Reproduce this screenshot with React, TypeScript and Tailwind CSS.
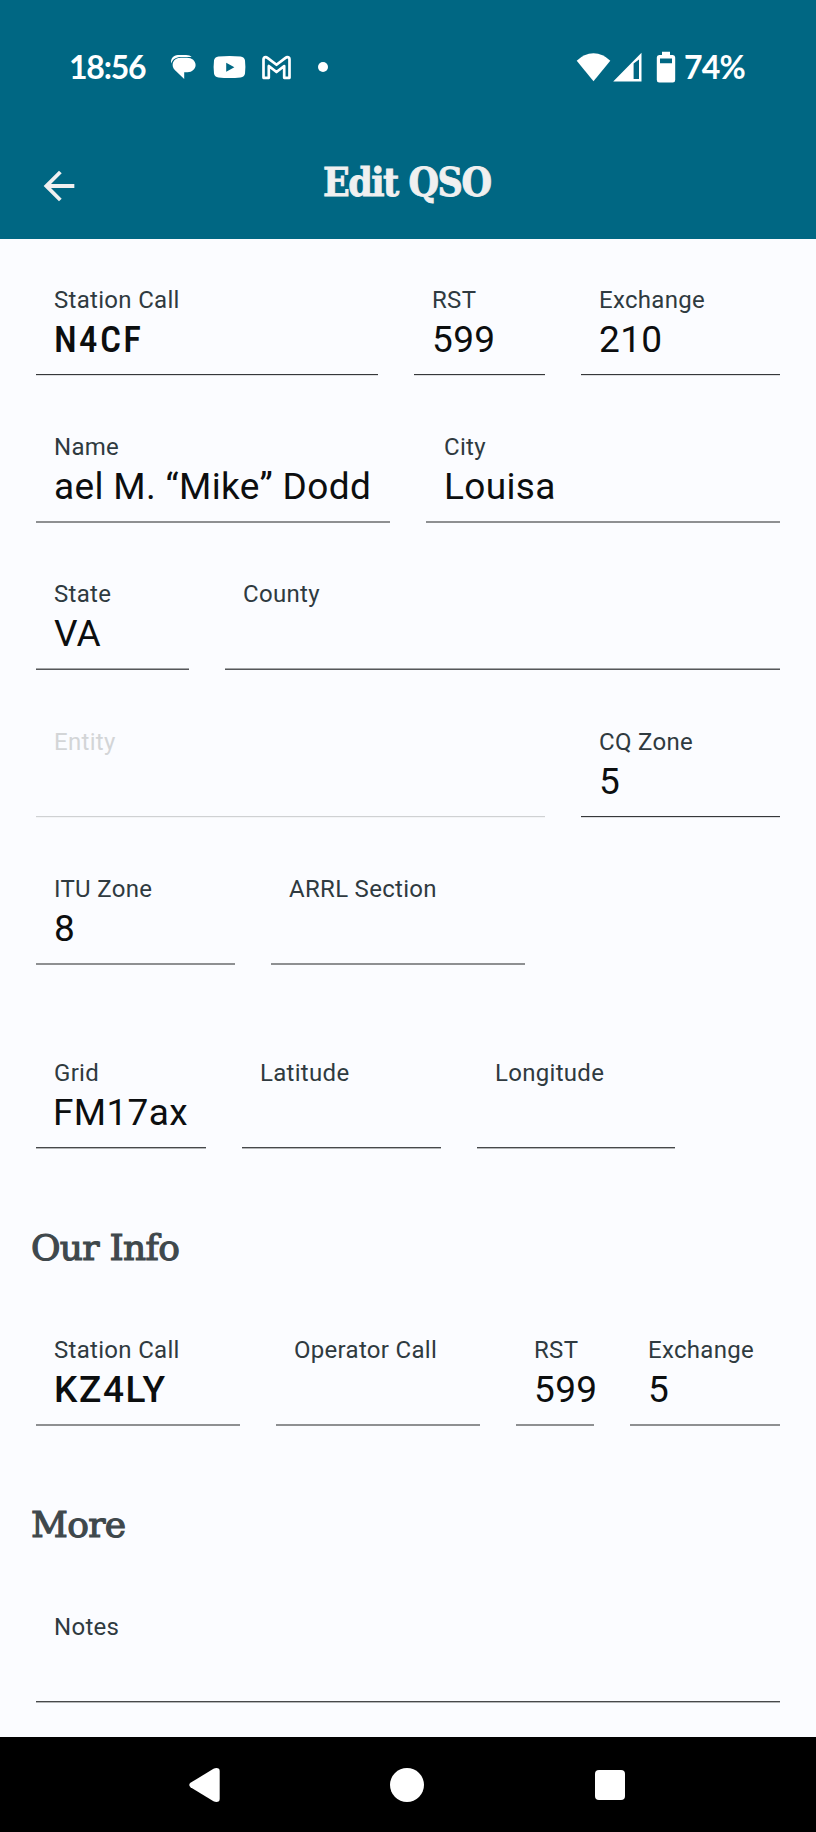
import React from 'react';

type FieldProps = {
  label: string;
  value?: string;
  width?: string;
  line?: string;
  valueClass?: string;
  disabled?: boolean;
};

// Two-pixel rules, lighter where the line falls between pixels
const LINE_SHARP = 'border-t-[#36383a] border-b-[#dcdde0]';
const LINE_EVEN = 'border-t-[#8e9092] border-b-[#8e9092]';
const LINE_MID = 'border-t-[#a3a5a7] border-b-[#55575a]';
const LINE_TOP = 'border-t-[#46484a] border-b-[#b4b6b8]';

const Field: React.FC<FieldProps> = ({
  label,
  value = '',
  width = 'flex-1',
  line = LINE_EVEN,
  valueClass = 'pl-[18px] tracking-[0.35px]',
  disabled = false,
}) => (
  <div className={`flex h-[94px] min-w-0 flex-col ${width}`}>
    <label
      className={`mt-[4px] pl-[18px] text-[24px] leading-[28px] tracking-[0.3px] whitespace-nowrap ${
        disabled ? 'text-[#d3d5d7]' : 'text-[#2f3a40]'
      }`}
    >
      {label}
    </label>
    <div className={`mt-[4px] h-[43px] text-[37px] leading-[43px] whitespace-nowrap text-[#0c0e0f] ${valueClass}`}>
      {value}
    </div>
    <div
      className={`mt-auto h-[2px] border-t border-b ${
        disabled ? 'border-t-[#cfd1d3] border-b-[#f3f4f6]' : line
      }`}
    />
  </div>
);

const Row: React.FC<{ className?: string; children: React.ReactNode }> = ({ className = '', children }) => (
  <div className={`flex gap-9 px-9 ${className}`}>{children}</div>
);

const SectionTitle: React.FC<{ className?: string; children: React.ReactNode }> = ({ className = '', children }) => (
  <h2
    className={`pl-[31px] font-['Roboto_Slab','DejaVu_Serif',serif] text-[36px] leading-[44px] tracking-[-0.7px] text-[#3f484c] [-webkit-text-stroke:1.2px_#3f484c] ${className}`}
  >
    {children}
  </h2>
);

const StatusBar = () => (
  <div className="flex h-[134px] items-center pr-[70px] pl-[69px] font-['Google_Sans',Lato,sans-serif] text-white">
    <span className="w-[101px] text-[32px] leading-[40px] font-bold tracking-[-1.2px]">18:56</span>
    <svg width="27" height="26" viewBox="0 0 27 26" fill="currentColor">
      <path d="M1.2 9.5C.2 5 3.500 1 8 1h8c2.500 0 4.500.9 5.700 2H11C6 3 2.500 5.200 1.200 9.500Z" />
      <path d="M11 3.800h6c5 0 8.600 3.200 8.600 7.200S22 18.200 17.500 18.200H14.200V25L4.800 16C2.600 13.800 2.200 11 3 8.600 4 5.500 7 3.800 11 3.800Z" />
    </svg>
    <svg className="ml-4" width="33" height="24" viewBox="0 0 33 24">
      <path
        fill="currentColor"
        fillRule="evenodd"
        d="M5.500 1.500Q16.500.3 27.500 1.500 31.500 2 32 5.500 32.800 12 32 18.500 31.500 22 27.500 22.500 16.500 23.700 5.500 22.500 1.500 22 1 18.500.2 12 1 5.500 1.500 2 5.500 1.500ZM13.200 7.700V16.700L21.400 12.200Z"
      />
    </svg>
    <svg className="ml-[15px]" width="31" height="25" viewBox="0 0 31 25" fill="none" stroke="currentColor" strokeWidth="2.7" strokeLinejoin="round">
      <path d="M2.500 22.800V4.500Q2.500 2.200 4.700 2.200 5.700 2.200 6.500 2.900L15.500 9.800 24.500 2.900Q25.300 2.200 26.300 2.200 28.500 2.200 28.500 4.500V22.800H23.200V11L15.500 17 7.800 11V22.800Z" />
    </svg>
    <span className="ml-[26px] h-[10px] w-[10px] rounded-full bg-white" />
    <div className="ml-auto flex items-center">
      <svg width="35" height="30" viewBox="0 0 35 30" fill="currentColor">
        <path d="M17.500 29.300.7 8.800Q8 1.300 17.500 1.300T34.300 8.800Z" />
      </svg>
      <svg className="ml-[2px]" width="29" height="30" viewBox="0 0 29 30">
        <path fill="currentColor" fillRule="evenodd" d="M28.500.8V29.500H.2ZM20.600 11.400V27H26V7.500Z" />
      </svg>
      <svg className="ml-[14px]" width="20" height="32" viewBox="0 0 20 32">
        <path
          fill="currentColor"
          fillRule="evenodd"
          d="M6 .8H14V4H16.800Q19.200 4 19.200 6.500V29Q19.200 31.500 16.800 31.500H3.200Q.8 31.500.8 29V6.500Q.8 4 3.200 4H6ZM4 7.500V12.300H16V7.500Z"
        />
      </svg>
      <span className="ml-[8px] w-[62px] text-[32px] leading-[40px] font-bold tracking-[-0.8px]">74%</span>
    </div>
  </div>
);

const AppBar = () => (
  <div className="flex h-[105px] items-start pl-[36px]">
    <button className="mt-[29px] text-[#f0f0f0]" aria-label="Back">
      <svg width="46" height="46" viewBox="0 0 24 24" fill="currentColor">
        <path d="M20 11H7.830l5.590-5.590L12 4l-8 8 8 8 1.410-1.410L7.830 13H20v-2z" />
      </svg>
    </button>
    <h1 className="mt-[24px] ml-[241px] font-['Roboto_Slab','DejaVu_Serif_Condensed','DejaVu_Serif',serif] text-[39px] leading-[48px] font-bold tracking-[-1.5px] whitespace-nowrap text-[#f0f0f0] [-webkit-text-stroke:0.8px_#f0f0f0]">
      Edit QSO
    </h1>
  </div>
);

const NavBar = () => (
  <nav className="flex h-[95px] items-center bg-black pl-[188px] text-white">
    <svg width="34" height="36" viewBox="0 0 34 36" fill="currentColor">
      <path d="M2.500 15.800 25.500 1.800Q28.500.300 31 1.800 31.700 2.500 31.700 4.500V31.500Q31.700 33.500 31 34.200 28.500 35.700 25.500 34.200L2.500 20.200Q0 18 2.500 15.800Z" />
    </svg>
    <span className="ml-[168px] h-[34px] w-[34px] rounded-full bg-white" />
    <span className="ml-[171px] h-[30px] w-[30px] rounded-[4px] bg-white" />
  </nav>
);

const App: React.FC = () => {
  return (
    <div className="flex h-[1832px] w-[816px] flex-col overflow-hidden bg-[#fbfcff] font-['Roboto',sans-serif]">
      <header className="bg-[#006783]">
        <StatusBar />
        <AppBar />
      </header>

      <main className="flex flex-1 flex-col pt-[43px]">
        <Row>
          <Field
            label="Station Call"
            value="N4CF"
            width="w-[342px]"
            line={LINE_SHARP}
            valueClass="pl-[18px] font-medium tracking-[2.3px] [font-stretch:85%]"
          />
          <Field label="RST" value="599" width="w-[131px]" line={LINE_SHARP} />
          <Field label="Exchange" value="210" line={LINE_SHARP} />
        </Row>
        <Row className="mt-[53px]">
          <Field label="Name" value="ael M. “Mike” Dodd" width="w-[354px]" />
          <Field label="City" value="Louisa" />
        </Row>
        <Row className="mt-[53px]">
          <Field label="State" value="VA" width="w-[153px]" line={LINE_MID} />
          <Field label="County" line={LINE_MID} />
        </Row>
        <Row className="mt-[54px]">
          <Field label="Entity" width="w-[509px]" disabled />
          <Field label="CQ Zone" value="5" line={LINE_SHARP} />
        </Row>
        <Row className="mt-[53px]">
          <Field label="ITU Zone" value="8" width="w-[199px]" />
          <Field label="ARRL Section" width="w-[254px]" />
        </Row>

        <Row className="mt-[90px]">
          <Field
            label="Grid"
            value="FM17ax"
            width="w-[170px]"
            line={LINE_TOP}
            valueClass="pl-[17px] tracking-[0.35px]"
          />
          <Field label="Latitude" width="w-[199px]" line={LINE_TOP} />
          <Field label="Longitude" width="w-[198px]" line={LINE_TOP} />
        </Row>

        <SectionTitle className="mt-[77px]">Our Info</SectionTitle>
        <Row className="mt-[62px]">
          <Field
            label="Station Call"
            value="KZ4LY"
            width="w-[204px]"
            valueClass="pl-[18px] font-medium tracking-[1.6px]"
          />
          <Field label="Operator Call" width="w-[204px]" />
          <Field label="RST" value="599" width="w-[78px]" />
          <Field label="Exchange" value="5" />
        </Row>

        <SectionTitle className="mt-[77px]">More</SectionTitle>
        <Row className="mt-[62px]">
          <Field label="Notes" line={LINE_TOP} />
        </Row>
      </main>

      <NavBar />
    </div>
  );
};

export default App;
